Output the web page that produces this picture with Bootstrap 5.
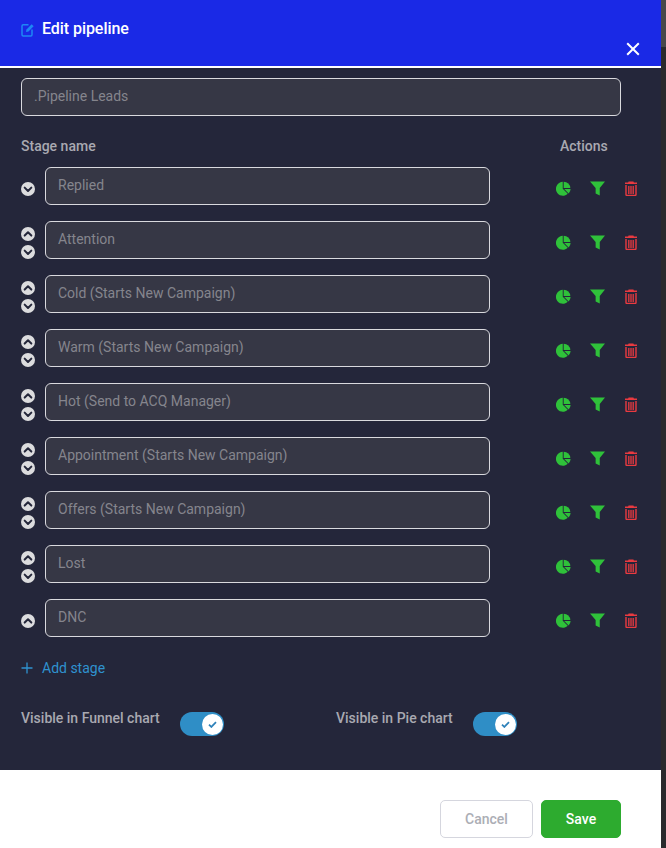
<!DOCTYPE html>
<html lang="en">
<head>
<meta charset="utf-8">
<title>Edit pipeline</title>
<link href="https://cdn.jsdelivr.net/npm/bootstrap@5.3.0/dist/css/bootstrap.min.css" rel="stylesheet">
<style>
html,body{margin:0;height:848px;overflow:hidden;background:#2b2b2e;font-family:Roboto,"Liberation Sans",sans-serif}
.shell{width:666px;height:848px}
.pane{width:661px;height:848px}
.gutter{width:5px;height:848px;background:#2a2a2d}
.gutter-thumb{height:47px;background:#48484c}
.head{height:68px;background:#1a29e6;border-bottom:2px solid #fff;padding:0 21px 0 21px;position:relative}
.head-title{font-size:16px;font-weight:500;color:#fff;line-height:20px;padding-top:19px;gap:8px;letter-spacing:-.06px}
.head-close{position:absolute;right:21px;top:42px;width:14px;height:14px;padding:0;background:none;border:0;display:block}
.body-pane{height:702px;background:#24263a;padding:10px 40px 0 21px}
.dark-input{height:38px;background:#363745;border:1px solid #d9d9de;border-radius:6px;color:#85858d;font-size:14px;padding:0 12px 2px;line-height:34px;box-shadow:none}
.dark-input:focus{background:#363745;color:#85858d;border-color:#d9d9de;box-shadow:none}
.col-labels{margin-top:21px;height:20px;font-size:14px;font-weight:500;color:#a9a9b1;line-height:18px}
.lbl-actions{width:48px;margin-right:13px;white-space:nowrap}
.stage-row{height:38px;margin-bottom:16px;width:600px}
.stage-first{margin-top:10px}
.arrows{width:24px;flex:none;gap:4px;padding-top:5px}
.arrow{display:block;width:14px;height:14px}
.stage-input{width:445px;flex:none}
.acts{margin-left:66px;gap:19px;padding-top:5px}
.act{display:block;width:15px;height:15px;flex:none}
.act-bin{width:14px}
.add-link{margin-top:21px;height:20px;color:#2f92cf;font-size:14px;line-height:20px;gap:9px;text-decoration:none}
.toggles{margin-top:31px}
.tog-label{font-size:14px;font-weight:500;color:#a9a9b1;line-height:18px;white-space:nowrap}
.tog-wrap{height:27px}
.tog-a{width:315px}
.pill{width:44px;height:24px;margin:3px 0 0 20px;border-radius:12px;background:#2f8ec6;position:relative;display:block}
.knob{position:absolute;right:1px;top:1.5px;width:21px;height:21px;border-radius:50%;background:#fff}
.tick{position:absolute;left:6px;top:7px;width:9px;height:7px}
.foot{height:78px;background:#fff;padding:30px 40px 0 0;gap:8px}
.btn-cancel{width:93px;height:38px;background:#fff;border:1px solid #d5d6de;border-radius:5px;color:#acaeb5;font-size:14px;font-weight:500;padding:0}
.btn-save{width:80px;height:38px;background:#2dab2f;border:1px solid #2dab2f;border-radius:5px;color:#fff;font-size:14px;font-weight:500;padding:0}
</style>
</head>
<body>
<svg width="0" height="0" class="d-block position-absolute">
<defs>
<symbol id="i-down" viewBox="0 0 16 16"><circle cx="8" cy="8" r="8" fill="#dcdcde"/><path d="M4.200 6.400 8 10.200l3.800-3.800" fill="none" stroke="#24263a" stroke-width="2.300" stroke-linecap="round" stroke-linejoin="round"/></symbol>
<symbol id="i-up" viewBox="0 0 16 16"><circle cx="8" cy="8" r="8" fill="#dcdcde"/><path d="M4.200 9.800 8 6l3.800 3.800" fill="none" stroke="#24263a" stroke-width="2.300" stroke-linecap="round" stroke-linejoin="round"/></symbol>
<symbol id="i-pie" viewBox="0 0 16 16"><path fill="#2fc13a" d="M7.200.9V8.300l5.300 5.300A7.400 7.400 0 1 1 7.200.9Z"/><path fill="#2fc13a" d="M8.200.7A7.100 7.100 0 0 1 15.300 7.500H8.200Z"/><path fill="#2fc13a" d="M8.800 8.600h6.800a7 7 0 0 1-2.100 4.700Z"/></symbol>
<symbol id="i-fun" viewBox="0 0 16 16"><path fill="#2fc13a" d="M0 .5h16L10.400 7.500v8L6 13.200V7.500Z"/></symbol>
<symbol id="i-bin" viewBox="0 0 14 15"><path fill="#ea3a40" d="M4.600.4h4.800l.5 1.200H13v1.500H1V1.600h3.100Z"/><path fill="none" stroke="#ea3a40" stroke-width="1.400" d="M2 4v9.500c0 .6.500 1 1 1h8c.5 0 1-.4 1-1V4"/><path stroke="#ea3a40" stroke-width="1.300" d="M4.800 5v8M7 5v8M9.200 5v8"/></symbol>
<symbol id="i-tick" viewBox="0 0 10 8"><path d="M1 4.200 3.700 6.800 9 1.400" fill="none" stroke="#2f82ba" stroke-width="2"/></symbol>
</defs>
</svg>
<div class="shell d-flex">
<div class="pane">
  <div class="head">
    <div class="head-title d-flex align-items-center">
      <svg width="13" height="15" viewBox="0 0 13 15" class="flex-none"><path d="M7.500 2.800H2.200c-.7 0-1.200.5-1.200 1.200v8.800c0 .7.500 1.200 1.200 1.200h7.600c.7 0 1.200-.5 1.200-1.200V7.500" fill="none" stroke="#1e88f5" stroke-width="1.500"/><path d="M5 9.900 5.500 7.500 10.600 2.200l2 2L7.500 9.400Z" fill="#1e88f5"/></svg>
      <span>Edit pipeline</span>
    </div>
    <button type="button" class="head-close" aria-label="Close"><svg width="14" height="14" viewBox="0 0 14 14" class="d-block"><path d="M1.200 1.200 12.800 12.800M12.800 1.200 1.200 12.800" stroke="#fff" stroke-width="2" fill="none"/></svg></button>
  </div>
  <div class="body-pane">
    <input class="form-control dark-input" value=".Pipeline Leads" aria-label="Pipeline name">
    <div class="col-labels d-flex justify-content-between"><span>Stage name</span><span class="lbl-actions">Actions</span></div>

    <div class="stage-row stage-first d-flex align-items-center">
      <div class="arrows d-flex flex-column"><svg class="arrow"><use href="#i-down"/></svg></div>
      <input class="form-control dark-input stage-input" value="Replied" aria-label="Stage">
      <div class="acts d-flex"><svg class="act"><use href="#i-pie"/></svg><svg class="act"><use href="#i-fun"/></svg><svg class="act act-bin"><use href="#i-bin"/></svg></div>
    </div>
    <div class="stage-row d-flex align-items-center">
      <div class="arrows d-flex flex-column"><svg class="arrow"><use href="#i-up"/></svg><svg class="arrow"><use href="#i-down"/></svg></div>
      <input class="form-control dark-input stage-input" value="Attention" aria-label="Stage">
      <div class="acts d-flex"><svg class="act"><use href="#i-pie"/></svg><svg class="act"><use href="#i-fun"/></svg><svg class="act act-bin"><use href="#i-bin"/></svg></div>
    </div>
    <div class="stage-row d-flex align-items-center">
      <div class="arrows d-flex flex-column"><svg class="arrow"><use href="#i-up"/></svg><svg class="arrow"><use href="#i-down"/></svg></div>
      <input class="form-control dark-input stage-input" value="Cold (Starts New Campaign)" aria-label="Stage">
      <div class="acts d-flex"><svg class="act"><use href="#i-pie"/></svg><svg class="act"><use href="#i-fun"/></svg><svg class="act act-bin"><use href="#i-bin"/></svg></div>
    </div>
    <div class="stage-row d-flex align-items-center">
      <div class="arrows d-flex flex-column"><svg class="arrow"><use href="#i-up"/></svg><svg class="arrow"><use href="#i-down"/></svg></div>
      <input class="form-control dark-input stage-input" value="Warm (Starts New Campaign)" aria-label="Stage">
      <div class="acts d-flex"><svg class="act"><use href="#i-pie"/></svg><svg class="act"><use href="#i-fun"/></svg><svg class="act act-bin"><use href="#i-bin"/></svg></div>
    </div>
    <div class="stage-row d-flex align-items-center">
      <div class="arrows d-flex flex-column"><svg class="arrow"><use href="#i-up"/></svg><svg class="arrow"><use href="#i-down"/></svg></div>
      <input class="form-control dark-input stage-input" value="Hot (Send to ACQ Manager)" aria-label="Stage">
      <div class="acts d-flex"><svg class="act"><use href="#i-pie"/></svg><svg class="act"><use href="#i-fun"/></svg><svg class="act act-bin"><use href="#i-bin"/></svg></div>
    </div>
    <div class="stage-row d-flex align-items-center">
      <div class="arrows d-flex flex-column"><svg class="arrow"><use href="#i-up"/></svg><svg class="arrow"><use href="#i-down"/></svg></div>
      <input class="form-control dark-input stage-input" value="Appointment (Starts New Campaign)" aria-label="Stage">
      <div class="acts d-flex"><svg class="act"><use href="#i-pie"/></svg><svg class="act"><use href="#i-fun"/></svg><svg class="act act-bin"><use href="#i-bin"/></svg></div>
    </div>
    <div class="stage-row d-flex align-items-center">
      <div class="arrows d-flex flex-column"><svg class="arrow"><use href="#i-up"/></svg><svg class="arrow"><use href="#i-down"/></svg></div>
      <input class="form-control dark-input stage-input" value="Offers (Starts New Campaign)" aria-label="Stage">
      <div class="acts d-flex"><svg class="act"><use href="#i-pie"/></svg><svg class="act"><use href="#i-fun"/></svg><svg class="act act-bin"><use href="#i-bin"/></svg></div>
    </div>
    <div class="stage-row d-flex align-items-center">
      <div class="arrows d-flex flex-column"><svg class="arrow"><use href="#i-up"/></svg><svg class="arrow"><use href="#i-down"/></svg></div>
      <input class="form-control dark-input stage-input" value="Lost" aria-label="Stage">
      <div class="acts d-flex"><svg class="act"><use href="#i-pie"/></svg><svg class="act"><use href="#i-fun"/></svg><svg class="act act-bin"><use href="#i-bin"/></svg></div>
    </div>
    <div class="stage-row d-flex align-items-center">
      <div class="arrows d-flex flex-column"><svg class="arrow"><use href="#i-up"/></svg></div>
      <input class="form-control dark-input stage-input" value="DNC" aria-label="Stage">
      <div class="acts d-flex"><svg class="act"><use href="#i-pie"/></svg><svg class="act"><use href="#i-fun"/></svg><svg class="act act-bin"><use href="#i-bin"/></svg></div>
    </div>

    <a href="#" class="add-link d-flex align-items-center">
      <svg width="12" height="12" viewBox="0 0 12 12"><path d="M6 .5v11M.5 6h11" stroke="#2f92cf" stroke-width="1.300" fill="none"/></svg>
      <span>Add stage</span>
    </a>
    <div class="toggles d-flex">
      <div class="tog-a d-flex tog-wrap"><span class="tog-label">Visible in Funnel chart</span><span class="pill"><span class="knob"><svg class="tick"><use href="#i-tick"/></svg></span></span></div>
      <div class="d-flex tog-wrap"><span class="tog-label">Visible in Pie chart</span><span class="pill"><span class="knob"><svg class="tick"><use href="#i-tick"/></svg></span></span></div>
    </div>
  </div>
  <div class="foot d-flex justify-content-end align-items-start">
    <button type="button" class="btn btn-cancel">Cancel</button>
    <button type="button" class="btn btn-save">Save</button>
  </div>
</div>
<div class="gutter"><div class="gutter-thumb"></div></div>
</div>
</body>
</html>
